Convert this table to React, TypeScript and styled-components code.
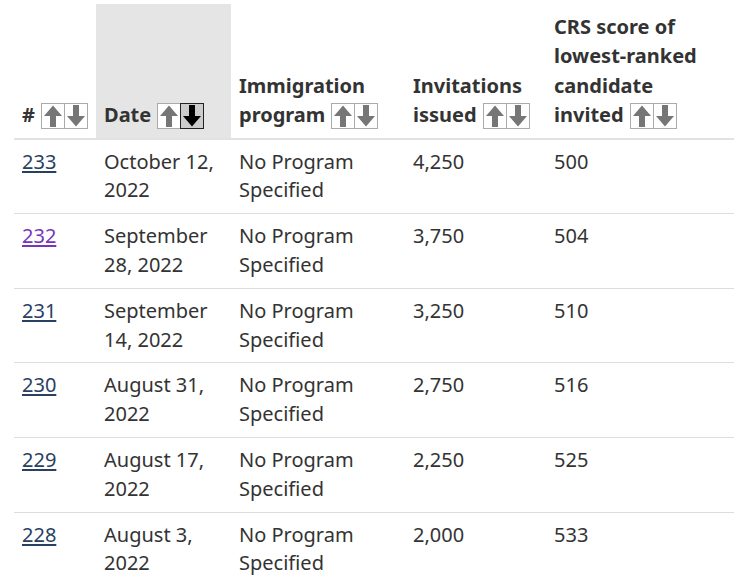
import React from "react";
import styled, { createGlobalStyle } from "styled-components";

const GlobalStyle = createGlobalStyle`
  body {
    margin: 0;
    background: #fff;
    font-family: "Noto Sans", "DejaVu Sans", sans-serif;
    color: #333;
  }
`;

const Wrapper = styled.div`
  padding: 4px 21px 0 14px;
`;

const Table = styled.table`
  width: 720px;
  border-collapse: collapse;
  table-layout: fixed;
  font-size: 20px;
  line-height: 28.8px;
`;

const HeadCell = styled.th<{ $w: number; $sorted?: boolean }>`
  width: ${(p) => p.$w}px;
  padding: 8px;
  text-align: left;
  vertical-align: bottom;
  font-weight: 700;
  line-height: 29.4px;
  color: #333;
  background: ${(p) => (p.$sorted ? "#e5e5e5" : "transparent")};
  border-bottom: 1px solid #222;
  box-sizing: border-box;
`;

const Row = styled.tr`
  border-top: 1px solid #ddd;
  &:first-child {
    border-top: 2px solid #e2e2e2;
  }
`;

const Cell = styled.td`
  padding: 8px;
  vertical-align: top;
  color: #333;
`;

const DrawLink = styled.a<{ $visited?: boolean }>`
  color: ${(p) => (p.$visited ? "#7834bc" : "#284162")};
  text-decoration: underline;
  text-underline-offset: 2px;
`;

const SortGroup = styled.span`
  display: inline-flex;
  vertical-align: -5px;
  margin-left: 6px;
`;

const SortButton = styled.button<{ $active?: boolean }>`
  width: 24px;
  height: 26px;
  padding: 0;
  margin: 0;
  display: inline-flex;
  align-items: center;
  justify-content: center;
  border: 1px solid ${(p) => (p.$active ? "#222" : "#aaa")};
  background: ${(p) => (p.$active ? "#ccc" : "#fff")};
  color: ${(p) => (p.$active ? "#000" : "#767676")};
  cursor: pointer;
  & + & {
    margin-left: -1px;
  }
  svg {
    width: 20px;
    height: 22px;
  }
`;

const Arrow = ({ down }: { down?: boolean }) => (
  <svg viewBox="0 0 20 20" fill="currentColor" aria-hidden="true" preserveAspectRatio="none">
    <polygon
      points="10,0.5 19,10 13,10 13,20 7,20 7,10 1,10"
      transform={down ? "rotate(180 10 10)" : undefined}
    />
  </svg>
);

const Sort = ({ active }: { active?: "up" | "down" }) => (
  <SortGroup>
    <SortButton $active={active === "up"} aria-label="Sort ascending">
      <Arrow />
    </SortButton>
    <SortButton $active={active === "down"} aria-label="Sort descending">
      <Arrow down />
    </SortButton>
  </SortGroup>
);

interface Draw {
  num: string;
  date: string;
  program: string;
  invites: string;
  score: string;
  visited?: boolean;
}

const draws: Draw[] = [
  { num: "233", date: "October 12, 2022", program: "No Program Specified", invites: "4,250", score: "500" },
  { num: "232", date: "September 28, 2022", program: "No Program Specified", invites: "3,750", score: "504", visited: true },
  { num: "231", date: "September 14, 2022", program: "No Program Specified", invites: "3,250", score: "510" },
  { num: "230", date: "August 31, 2022", program: "No Program Specified", invites: "2,750", score: "516" },
  { num: "229", date: "August 17, 2022", program: "No Program Specified", invites: "2,250", score: "525" },
  { num: "228", date: "August 3, 2022", program: "No Program Specified", invites: "2,000", score: "533" },
];

export default function App() {
  return (
    <Wrapper>
      <GlobalStyle />
      <Table>
        <thead>
          <tr>
            <HeadCell $w={82}>
              #<Sort />
            </HeadCell>
            <HeadCell $w={135} $sorted>
              Date<Sort active="down" />
            </HeadCell>
            <HeadCell $w={174}>
              Immigration program<Sort />
            </HeadCell>
            <HeadCell $w={141}>
              Invitations issued<Sort />
            </HeadCell>
            <HeadCell $w={188}>
              CRS score of lowest-ranked candidate invited<Sort />
            </HeadCell>
          </tr>
        </thead>
        <tbody>
          {draws.map((d) => (
            <Row key={d.num}>
              <Cell>
                <DrawLink href="#" $visited={d.visited}>
                  {d.num}
                </DrawLink>
              </Cell>
              <Cell>{d.date}</Cell>
              <Cell>{d.program}</Cell>
              <Cell>{d.invites}</Cell>
              <Cell>{d.score}</Cell>
            </Row>
          ))}
        </tbody>
      </Table>
    </Wrapper>
  );
}
